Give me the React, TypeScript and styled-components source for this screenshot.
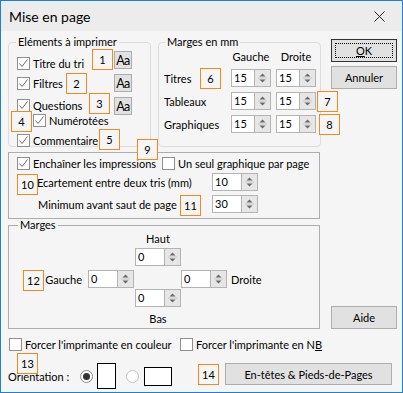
import styled, { createGlobalStyle } from "styled-components";

const FONT = `"Segoe UI", Lato, "Liberation Sans", sans-serif`;

const GlobalStyle = createGlobalStyle`
  * { box-sizing: border-box; }
  body {
    margin: 0;
    background: #fff;
    font-family: ${FONT};
    font-size: 11px;
    color: #000;
  }
`;

const Window = styled.div`
  position: relative;
  width: 403px;
  height: 393px;
  border: 1px solid #1a82d6;
  background: #f5f5f5;
  display: flex;
  flex-direction: column;
`;

const TitleBar = styled.div`
  height: 30px;
  flex: none;
  display: flex;
  align-items: center;
  justify-content: space-between;
  padding: 0 17px 0 8px;
  background: #ececec;
  font-size: 14px;
`;

const Body = styled.div`
  display: flex;
  flex-direction: column;
  padding: 4px 5px 0 7px;
`;

const TopRow = styled.div`
  display: flex;
  align-items: flex-start;
`;

const Group = styled.fieldset<{ $w: number; $h: number; $square?: boolean; $gap?: number }>`
  margin: 0 0 0 ${(p) => p.$gap ?? 0}px;
  padding: 0;
  min-width: 0;
  width: ${(p) => p.$w}px;
  height: ${(p) => p.$h}px;
  border: 1px solid ${(p) => (p.$square ? "#adadad" : "#dcdcdc")};
  border-radius: ${(p) => (p.$square ? 0 : 4)}px;
`;

const Legend = styled.legend<{ $ml: number; $lh?: number }>`
  margin-left: ${(p) => p.$ml}px;
  padding: 0 2px;
  line-height: ${(p) => p.$lh ?? 14}px;
`;

const PrintList = styled.div`
  display: flex;
  padding: 2px 18px 0 8px;
`;

const Checks = styled.div`
  flex: 1;
  display: flex;
  flex-direction: column;
`;

const CheckRow = styled.label<{ $mt?: number; $indent?: number }>`
  display: flex;
  align-items: center;
  gap: 3px;
  height: 15px;
  margin-top: ${(p) => p.$mt ?? 0}px;
  margin-left: ${(p) => p.$indent ?? 0}px;
  white-space: nowrap;
`;

const Box = styled.span`
  flex: none;
  width: 13px;
  height: 13px;
  border: 1px solid #8f8f8f;
  background: #fff;
  display: flex;
  align-items: center;
  justify-content: center;
`;

const FontButtons = styled.div`
  display: flex;
  flex-direction: column;
  gap: 5px;
`;

const FontButton = styled.button`
  width: 18px;
  height: 18px;
  padding: 0;
  border: 1px solid #adadad;
  background: #e1e1e1;
  font-family: ${FONT};
  font-size: 12.5px;
  letter-spacing: -0.5px;
  color: #000;
`;

const MmGrid = styled.div`
  display: grid;
  grid-template-columns: 62px 40px 40px;
  grid-template-rows: 14px 18px 18px 18px;
  column-gap: 5px;
  row-gap: 5px;
  padding: 1px 0 0 5px;
`;

const ColHead = styled.span`
  text-align: center;
  line-height: 14px;
`;

const RowLabel = styled.span`
  align-self: center;
  white-space: nowrap;
`;

const Buttons = styled.div`
  display: flex;
  flex-direction: column;
  gap: 4px;
  margin-left: 10px;
  padding-top: 4px;
`;

const Button = styled.button<{ $w?: number; $h?: number; $default?: boolean }>`
  width: ${(p) => p.$w ?? 66}px;
  height: ${(p) => p.$h ?? 23}px;
  padding: 0;
  border: 1px solid ${(p) => (p.$default ? "#333" : "#adadad")};
  background: #e1e1e1;
  font-family: ${FONT};
  font-size: 11px;
  color: #000;
  display: flex;
  align-items: center;
  justify-content: center;
`;

const Focus = styled.span`
  width: 58px;
  height: 15px;
  border: 1px dotted #000;
  display: flex;
  align-items: center;
  justify-content: center;
`;

const OptionsBox = styled.div`
  width: 312px;
  height: 67px;
  margin-top: 5px;
  border: 1px solid #adadad;
  padding: 3px 0 0 8px;
`;

const OptionsTop = styled.div`
  display: grid;
  grid-template-columns: 145px auto;
`;

const OptionsGrid = styled.div`
  display: grid;
  grid-template-columns: 195px 46px;
  row-gap: 4px;
  margin-top: 2px;
`;

const OptionLabel = styled.span<{ $pad: number }>`
  align-self: center;
  padding-left: ${(p) => p.$pad}px;
  white-space: nowrap;
`;

const MarginRow = styled.div`
  display: flex;
  align-items: flex-end;
  gap: 11px;
`;

const MarginGrid = styled.div`
  display: grid;
  grid-template-columns: 79px 47px 46px 46px 1fr;
  grid-template-rows: 17px 22px 19px 22px 16px;
  align-items: start;
`;

const Cell = styled.div<{ $col: number; $row: number }>`
  grid-column: ${(p) => p.$col};
  grid-row: ${(p) => p.$row};
`;

const SideLabel = styled(Cell)<{ $end?: boolean }>`
  align-self: center;
  justify-self: ${(p) => (p.$end ? "end" : "start")};
  padding: ${(p) => (p.$end ? "0 6px 0 0" : "0 0 0 4px")};
`;

const CenterLabel = styled(Cell)`
  text-align: center;
  line-height: 15px;
`;

const ForceRow = styled.div`
  display: grid;
  grid-template-columns: 171px auto;
  margin: 8px 0 0 1px;
`;

const OrientRow = styled.div`
  display: flex;
  align-items: center;
  height: 26px;
  margin-top: 11px;
`;

const OrientLabel = styled.span`
  width: 72px;
`;

const Radio = styled.span<{ $on?: boolean; $ml?: number }>`
  flex: none;
  width: 13px;
  height: 13px;
  margin-left: ${(p) => p.$ml ?? 0}px;
  border-radius: 50%;
  border: 1px solid ${(p) => (p.$on ? "#8a8a8a" : "#c4c4c4")};
  background: #fff;
  display: flex;
  align-items: center;
  justify-content: center;
  &::after {
    content: "";
    width: 7px;
    height: 7px;
    border-radius: 50%;
    background: ${(p) => (p.$on ? "#333" : "transparent")};
  }
`;

const Sheet = styled.span<{ $w: number; $h: number; $ml: number }>`
  flex: none;
  width: ${(p) => p.$w}px;
  height: ${(p) => p.$h}px;
  margin-left: ${(p) => p.$ml}px;
  border: 1px solid #000;
  background: #fff;
`;

const HeaderButton = styled(Button)`
  align-self: flex-start;
  margin: 0 5px 0 auto;
`;

const SpinBox = styled.div<{ $w: number }>`
  display: flex;
  width: ${(p) => p.$w}px;
  height: 18px;
`;

const SpinField = styled.span`
  flex: 1;
  background: #fff;
  border: 1px solid #b4b4b4;
  border-right: none;
  padding-left: 2px;
  line-height: 16px;
`;

const SpinArrows = styled.span`
  width: 17px;
  flex: none;
  border: 1px solid #b4b4b4;
  background: #e6e6e6;
  display: flex;
  align-items: center;
  justify-content: center;
`;

const Badge = styled.div<{ $x: number; $y: number }>`
  position: absolute;
  left: ${(p) => p.$x}px;
  top: ${(p) => p.$y}px;
  width: 21px;
  height: 21px;
  border: 1px solid #f2891a;
  background: #f5f5f5;
  display: flex;
  align-items: center;
  justify-content: center;
`;

function Check({ label, on, mt, indent }: { label: React.ReactNode; on?: boolean; mt?: number; indent?: number }) {
  return (
    <CheckRow $mt={mt} $indent={indent}>
      <Box>
        {on && (
          <svg width="11" height="11" viewBox="0 0 11 11">
            <polyline points="1.5,5.5 4,8.5 9.5,1.5" fill="none" stroke="#6b6b6b" strokeWidth="1" />
          </svg>
        )}
      </Box>
      <span>{label}</span>
    </CheckRow>
  );
}

function Spin({ value, w = 46 }: { value: string; w?: number }) {
  return (
    <SpinBox $w={w}>
      <SpinField>{value}</SpinField>
      <SpinArrows>
        <svg width="9" height="12" viewBox="0 0 9 12">
          <polygon points="1.5,4.5 4.5,1.5 7.5,4.5" fill="#6a6a6a" />
          <line x1="0" y1="6" x2="9" y2="6" stroke="#c8c8c8" />
          <polygon points="1.5,7.5 7.5,7.5 4.5,10.5" fill="#6a6a6a" />
        </svg>
      </SpinArrows>
    </SpinBox>
  );
}

const badges: [string, number, number][] = [
  ["1", 91, 48],
  ["2", 65, 72],
  ["3", 88, 92],
  ["4", 10, 110],
  ["5", 98, 128],
  ["6", 199, 67],
  ["7", 316, 90],
  ["8", 318, 113],
  ["9", 136, 138],
  ["10", 16, 173],
  ["11", 179, 194],
  ["12", 22, 269],
  ["13", 16, 352],
  ["14", 197, 363],
];

export default function App() {
  return (
    <>
      <GlobalStyle />
      <Window>
        <TitleBar>
          <span>Mise en page</span>
          <svg width="11" height="11" viewBox="0 0 11 11">
            <path d="M0.5 0.5 L10.5 10.5 M10.5 0.5 L0.5 10.5" stroke="#222" strokeWidth="1" />
          </svg>
        </TitleBar>
        <Body>
          <TopRow>
            <Group $w={143} $h={112}>
              <Legend $ml={7}>Eléments à imprimer</Legend>
              <PrintList>
                <Checks>
                  <Check on label="Titre du tri" mt={5} />
                  <Check on label="Filtres" mt={5} />
                  <Check on label="Questions" mt={7} />
                  <Check on label="Numérotées" indent={16} />
                  <Check on label="Commentaire" mt={5} />
                </Checks>
                <FontButtons>
                  <FontButton>Aa</FontButton>
                  <FontButton>Aa</FontButton>
                  <FontButton>Aa</FontButton>
                </FontButtons>
              </PrintList>
            </Group>
            <Group $w={163} $h={112} $gap={7}>
              <Legend $ml={6}>Marges en mm</Legend>
              <MmGrid>
                <span />
                <ColHead>Gauche</ColHead>
                <ColHead>Droite</ColHead>
                <RowLabel>Titres</RowLabel>
                <Spin value="15" w={40} />
                <Spin value="15" w={40} />
                <RowLabel>Tableaux</RowLabel>
                <Spin value="15" w={40} />
                <Spin value="15" w={40} />
                <RowLabel>Graphiques</RowLabel>
                <Spin value="15" w={40} />
                <Spin value="15" w={40} />
              </MmGrid>
            </Group>
            <Buttons>
              <Button $default>
                <Focus>
                  <span>
                    <u>O</u>K
                  </span>
                </Focus>
              </Button>
              <Button>Annuler</Button>
            </Buttons>
          </TopRow>

          <OptionsBox>
            <OptionsTop>
              <Check on label="Enchaîner les impressions" />
              <Check label="Un seul graphique par page" />
            </OptionsTop>
            <OptionsGrid>
              <OptionLabel $pad={20}>Ecartement entre deux tris (mm)</OptionLabel>
              <Spin value="10" />
              <OptionLabel $pad={21}>Minimum avant saut de page</OptionLabel>
              <Spin value="30" />
            </OptionsGrid>
          </OptionsBox>

          <MarginRow>
            <Group $w={312} $h={110} $square>
              <Legend $ml={9} $lh={12}>Marges</Legend>
              <MarginGrid>
                <CenterLabel $col={3} $row={1}>Haut</CenterLabel>
                <Cell $col={3} $row={2}>
                  <Spin value="0" />
                </Cell>
                <SideLabel $col={1} $row={3} $end>Gauche</SideLabel>
                <Cell $col={2} $row={3}>
                  <Spin value="0" />
                </Cell>
                <Cell $col={4} $row={3}>
                  <Spin value="0" />
                </Cell>
                <SideLabel $col={5} $row={3}>Droite</SideLabel>
                <Cell $col={3} $row={4}>
                  <Spin value="0" />
                </Cell>
                <CenterLabel $col={3} $row={5}>Bas</CenterLabel>
              </MarginGrid>
            </Group>
            <Button>Aide</Button>
          </MarginRow>

          <ForceRow>
            <Check label="Forcer l'imprimante en couleur" />
            <Check
              label={
                <>
                  Forcer l'imprimante en N<u>B</u>
                </>
              }
            />
          </ForceRow>

          <OrientRow>
            <OrientLabel>Orientation :</OrientLabel>
            <Radio $on />
            <Sheet $w={19} $h={26} $ml={4} />
            <Radio $ml={10} />
            <Sheet $w={28} $h={19} $ml={5} />
            <HeaderButton $w={167} $h={22}>En-têtes &amp; Pieds-de-Pages</HeaderButton>
          </OrientRow>
        </Body>
        {badges.map(([n, x, y]) => (
          <Badge key={n} $x={x} $y={y}>
            {n}
          </Badge>
        ))}
      </Window>
    </>
  );
}
